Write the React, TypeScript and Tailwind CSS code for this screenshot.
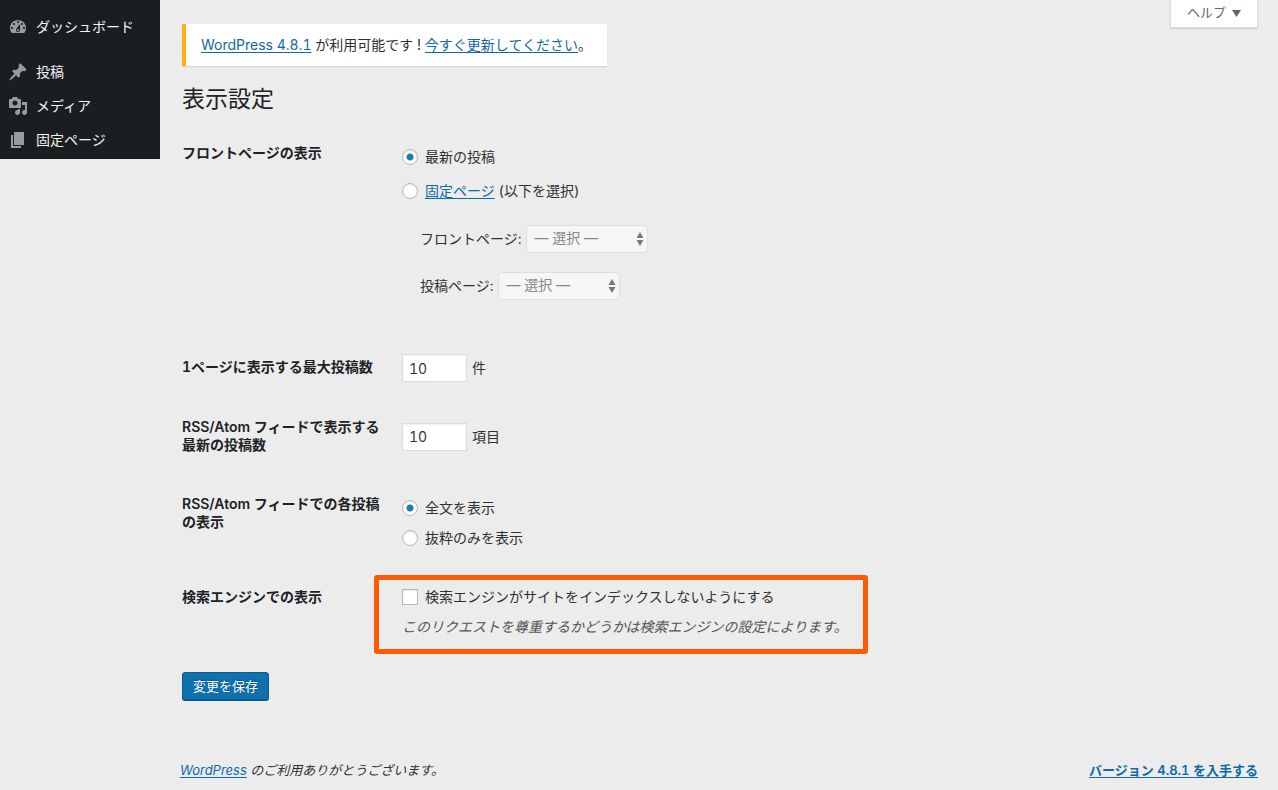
import { useState } from "react";
import type { ReactNode } from "react";

const menus = [
  {
    name: "ダッシュボード",
    icon: "M3.76 16h12.48c1.1-1.37 1.76-3.11 1.76-5 0-4.42-3.58-8-8-8s-8 3.58-8 8c0 1.89.66 3.63 1.76 5zM10 4c.55 0 1 .45 1 1s-.45 1-1 1-1-.45-1-1 .45-1 1-1zM6 6c.55 0 1 .45 1 1s-.45 1-1 1-1-.45-1-1 .45-1 1-1zm8 0c.55 0 1 .45 1 1s-.45 1-1 1-1-.45-1-1 .45-1 1-1zm-5.37 5.55L12 7v6c0 1.1-.9 2-2 2s-2-.9-2-2c0-.57.24-1.08.63-1.45zM4 10c.55 0 1 .45 1 1s-.45 1-1 1-1-.45-1-1 .45-1 1-1zm12 0c.55 0 1 .45 1 1s-.45 1-1 1-1-.45-1-1 .45-1 1-1zm-5 3c0-.55-.45-1-1-1s-1 .45-1 1 .45 1 1 1 1-.45 1-1z",
  },
  {
    name: "投稿",
    icon: "M10.44 3.02l1.82-1.82 6.36 6.35-1.83 1.82c-1.05-.68-2.48-.57-3.41.36l-.75.75c-.92.93-1.04 2.35-.35 3.41l-1.83 1.82-2.41-2.41-2.8 2.79c-.42.42-3.38 2.71-3.8 2.29s1.86-3.39 2.28-3.81l2.79-2.79L4.1 9.36l1.83-1.82c1.05.69 2.48.57 3.4-.36l.75-.75c.93-.92 1.05-2.35.36-3.41z",
  },
  {
    name: "メディア",
    icon: "M13 11V4c0-.55-.45-1-1-1h-1.67L9 1H5L3.67 3H2c-.55 0-1 .45-1 1v7c0 .55.45 1 1 1h10c.55 0 1-.45 1-1zM7 4.5c1.38 0 2.5 1.12 2.5 2.5S8.38 9.5 7 9.5 4.5 8.38 4.5 7 5.62 4.5 7 4.5zM14 6h5v10.5c0 1.38-1.12 2.5-2.5 2.5S14 17.88 14 16.5s1.12-2.5 2.5-2.5c.17 0 .34.02.5.05V9h-3V6zm-4 8.05V13h2v3.5c0 1.38-1.12 2.5-2.5 2.5S7 17.88 7 16.5 8.12 14 9.5 14c.17 0 .34.02.5.05z",
  },
  {
    name: "固定ページ",
    icon: "M6 15V2h10v13H6zm-1 1h8v2H3V5h2v11z",
  },
];

const linkClass = "text-[#0f69a5] underline underline-offset-2";

type RowProps = {
  title: string;
  id: string;
  htmlFor?: string;
  className: string;
  children: ReactNode;
};

function Row({ title, id, htmlFor, className, children }: RowProps) {
  return (
    <div className={`grid grid-cols-[220px_1fr] ${className}`}>
      <div className="pt-5 pr-3 font-semibold leading-[18px] text-[#1d2226]">
        {htmlFor ? (
          <label htmlFor={htmlFor}>{title}</label>
        ) : (
          <span id={id}>{title}</span>
        )}
      </div>
      {children}
    </div>
  );
}

type RadioProps = {
  name: string;
  checked: boolean;
  onChange: () => void;
  children: ReactNode;
};

function Radio({ name, checked, onChange, children }: RadioProps) {
  return (
    <label className="flex items-center gap-[7px] leading-5">
      <input
        type="radio"
        name={name}
        checked={checked}
        onChange={onChange}
        className="size-4 appearance-none rounded-full border border-[#b4b9be] bg-white shadow-[inset_0_1px_2px_rgba(0,0,0,0.1)] checked:bg-[radial-gradient(circle,#1e7cb5_3px,transparent_4px)]"
      />
      <span>{children}</span>
    </label>
  );
}

function PageSelect({ id, label }: { id: string; label: string }) {
  return (
    <div className="flex items-center gap-[5px]">
      <label htmlFor={id}>{label}</label>
      <div className="relative">
        <select
          id={id}
          disabled
          className="block h-7 w-[122px] appearance-none rounded-[5px] border border-[#dedede] bg-[#f6f6f6] pb-[2px] pl-[7px] text-sm text-[#888] opacity-100"
        >
          <option>— 選択 —</option>
        </select>
        <svg
          viewBox="0 0 8 14"
          className="pointer-events-none absolute top-[7px] right-1 h-[14px] w-2 fill-[#777]"
        >
          <path d="M4 0l3.5 6h-7zM4 14L.5 8h7z" />
        </svg>
      </div>
    </div>
  );
}

type CountProps = {
  id: string;
  value: string;
  onChange: (value: string) => void;
  unit: string;
};

function CountInput({ id, value, onChange, unit }: CountProps) {
  return (
    <div className="flex items-center gap-[5px]">
      <input
        id={id}
        type="text"
        value={value}
        onChange={(e) => onChange(e.target.value)}
        className="h-7 w-[65px] border border-[#ddd] bg-white px-[6px] text-sm text-[#32373c] shadow-[inset_0_1px_2px_rgba(0,0,0,0.07)]"
      />
      <span>{unit}</span>
    </div>
  );
}

export default function App() {
  const [front, setFront] = useState("posts");
  const [perPage, setPerPage] = useState("10");
  const [perRss, setPerRss] = useState("10");
  const [feed, setFeed] = useState("full");
  const [noIndex, setNoIndex] = useState(false);

  return (
    <div className="flex min-h-screen items-start bg-[#ececec] font-['Inter','Noto_Sans_CJK_JP',sans-serif] text-sm text-[#2c3135] tabular-nums">
      {/* sidebar */}
      <nav className="w-40 shrink-0 bg-[#1a1e21] pt-[10px] pb-[2px]">
        <ul>
          {menus.map((menu) => (
            <li key={menu.name} className="first:mb-[11px]">
              <a
                href="#"
                className="flex h-[34px] items-center gap-2 pl-2 text-[#f4f4f4]"
              >
                <svg viewBox="0 0 20 20" className="size-5 fill-[#979ca1]">
                  <path d={menu.icon} />
                </svg>
                <span>{menu.name}</span>
              </a>
            </li>
          ))}
        </ul>
      </nav>
      {/* end sidebar */}

      <div className="flex min-h-screen flex-1 flex-col pr-5">
        <main className="pl-[22px]">
          <div className="flex items-start justify-between">
            <p className="mt-6 border-l-4 border-[#ffb010] bg-white px-[15px] py-[11px] leading-5 shadow-[0_1px_1px_rgba(0,0,0,0.1)]">
              <a href="#" className={linkClass}>
                WordPress 4.8.1
              </a>{" "}
              が利用可能です !{" "}
              <a href="#" className={linkClass}>
                今すぐ更新してください
              </a>
              。
            </p>
            <button
              type="button"
              className="flex h-7 items-center gap-[6px] border border-t-0 border-[#ddd] bg-white px-4 pb-[2px] text-[13px] text-[#5f666c] shadow-[0_1px_1px_rgba(0,0,0,0.1)]"
            >
              ヘルプ
              <svg viewBox="0 0 9 8" className="h-2 w-[9px] fill-[#5f666c]">
                <path d="M0 1h9L4.5 8z" />
              </svg>
            </button>
          </div>

          <h1 className="mt-[18px] text-[23px] leading-[30px] text-[#1d2226]">
            表示設定
          </h1>

          <form className="mt-[10px]" onSubmit={(e) => e.preventDefault()}>
            <Row title="フロントページの表示" id="front-title" className="min-h-[214px]">
              <div
                role="radiogroup"
                aria-labelledby="front-title"
                className="flex flex-col gap-[14px] pt-[23px]"
              >
                <Radio
                  name="front"
                  checked={front === "posts"}
                  onChange={() => setFront("posts")}
                >
                  最新の投稿
                </Radio>
                <Radio
                  name="front"
                  checked={front === "page"}
                  onChange={() => setFront("page")}
                >
                  <a href="#" className={linkClass}>
                    固定ページ
                  </a>{" "}
                  (以下を選択)
                </Radio>
                <div className="flex flex-col gap-[19px] pt-[10px] pl-[18px]">
                  <PageSelect id="page-front" label="フロントページ:" />
                  <PageSelect id="page-posts" label="投稿ページ:" />
                </div>
              </div>
            </Row>

            <Row
              title="1ページに表示する最大投稿数"
              id="per-page-title"
              htmlFor="per-page"
              className="min-h-[60px]"
            >
              <CountInput id="per-page" value={perPage} onChange={setPerPage} unit="件" />
            </Row>

            <Row
              title="RSS/Atom フィードで表示する最新の投稿数"
              id="per-rss-title"
              htmlFor="per-rss"
              className="min-h-[77px]"
            >
              <CountInput id="per-rss" value={perRss} onChange={setPerRss} unit="項目" />
            </Row>

            <Row
              title="RSS/Atom フィードでの各投稿の表示"
              id="feed-title"
              className="min-h-[93px]"
            >
              <div
                role="radiogroup"
                aria-labelledby="feed-title"
                className="flex flex-col gap-[10px] pt-[23px]"
              >
                <Radio
                  name="feed"
                  checked={feed === "full"}
                  onChange={() => setFeed("full")}
                >
                  全文を表示
                </Radio>
                <Radio
                  name="feed"
                  checked={feed === "summary"}
                  onChange={() => setFeed("summary")}
                >
                  抜粋のみを表示
                </Radio>
              </div>
            </Row>

            <Row title="検索エンジンでの表示" id="search-title" className="min-h-[88px]">
              <div className="relative w-fit pt-[19px]">
                <label className="flex items-center gap-[7px] leading-5">
                  <input
                    type="checkbox"
                    checked={noIndex}
                    onChange={(e) => setNoIndex(e.target.checked)}
                    className="size-4 appearance-none border border-[#b4b9be] bg-white shadow-[inset_0_1px_2px_rgba(0,0,0,0.1)] checked:bg-[#1e7cb5]"
                  />
                  <span>検索エンジンがサイトをインデックスしないようにする</span>
                </label>
                <p className="mt-[10px] leading-5 text-[#50555a] italic">
                  このリクエストを尊重するかどうかは検索エンジンの設定によります。
                </p>
                {/* highlight frame */}
                <div className="pointer-events-none absolute top-[7px] -right-5 -left-7 h-[79px] rounded-[3px] border-[5px] border-[#ff5b05]" />
              </div>
            </Row>

            <button
              type="submit"
              className="mt-4 h-[28px] rounded-[3px] border border-[#0a5c91] bg-[#0f72ae] px-[10px] text-[13px] text-white shadow-[0_1px_0_#0a5788] text-shadow-[0_-1px_1px_#0a5788]"
            >
              変更を保存
            </button>
          </form>
        </main>

        {/* footer */}
        <footer className="mt-auto flex justify-between pb-[10px] pl-5 text-[13px] leading-5">
          <p className="italic">
            <a href="#" className={linkClass}>
              WordPress
            </a>{" "}
            のご利用ありがとうございます。
          </p>
          <a href="#" className={`font-semibold ${linkClass}`}>
            バージョン 4.8.1 を入手する
          </a>
        </footer>
        {/* end footer */}
      </div>
    </div>
  );
}
